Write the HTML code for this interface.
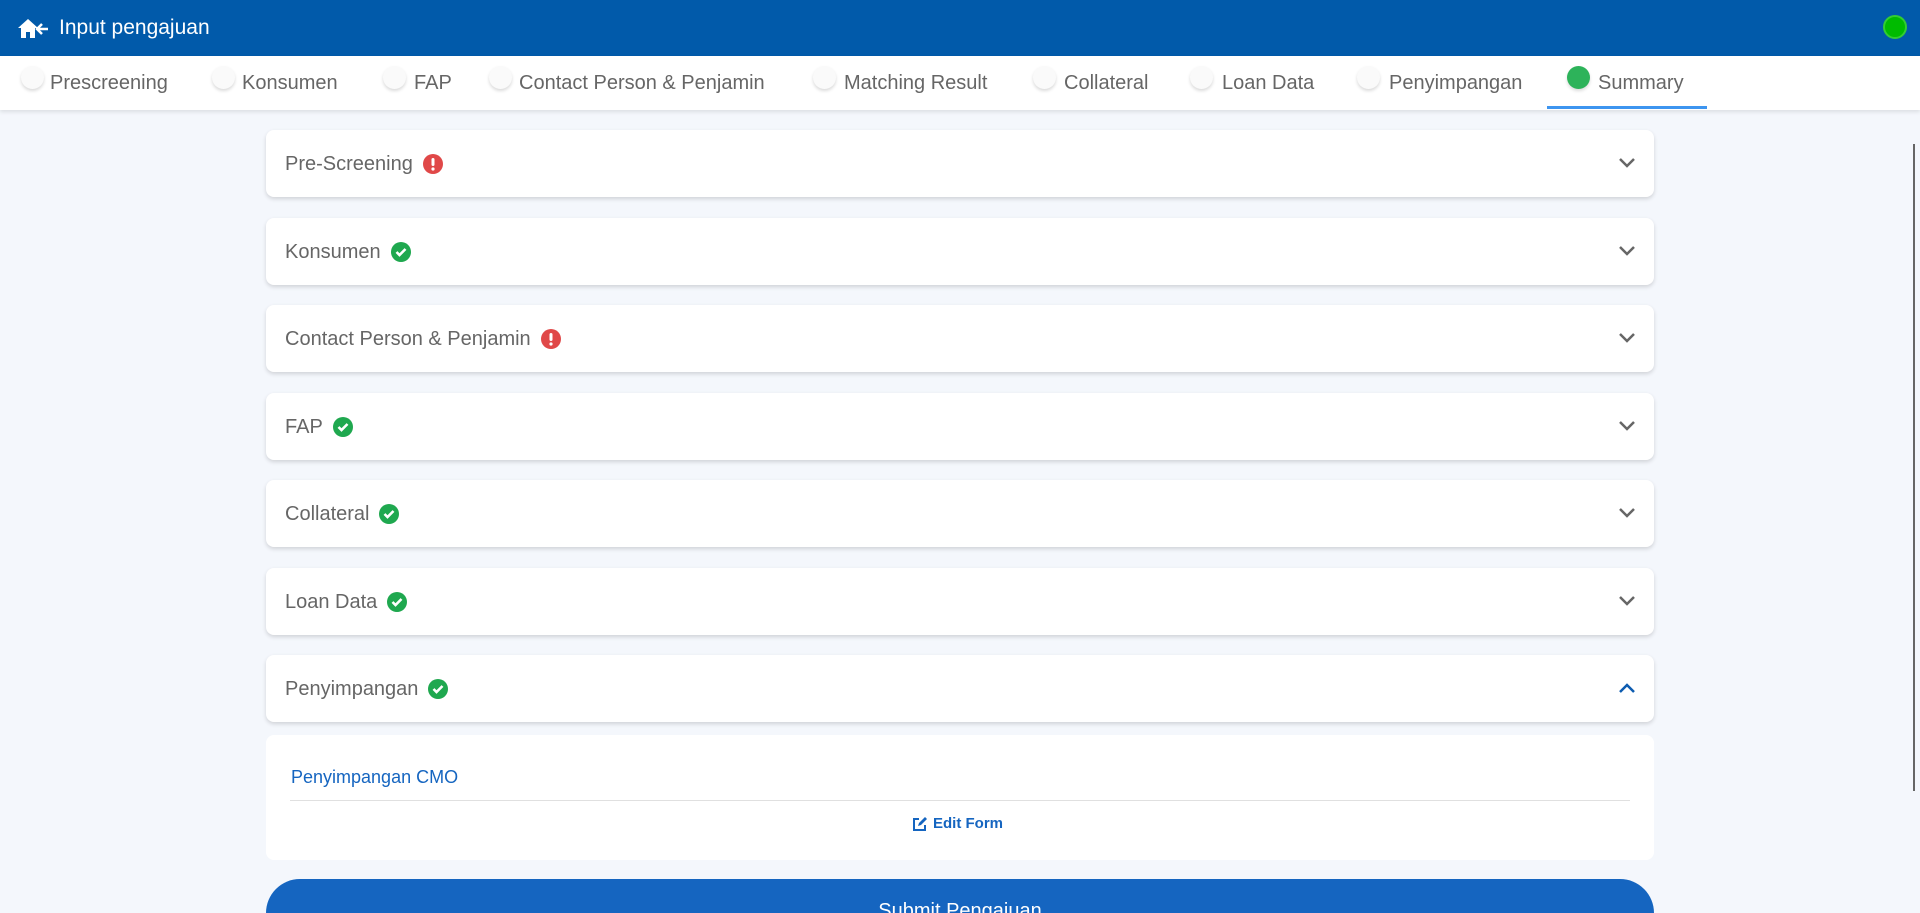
<!DOCTYPE html>
<html style="overflow:hidden;width:1920px;height:913px"><head><meta charset="utf-8"><style>
*{box-sizing:border-box;margin:0;padding:0}
body{width:1920px;height:913px;overflow:hidden;background:#f4f7fc;font-family:"Liberation Sans",sans-serif;position:relative}
.hdr{position:absolute;left:0;top:0;width:1920px;height:56px;background:#015aaa;color:#fff}
.hdr .t{position:absolute;left:59px;top:16px;font-size:21px}
.dot{position:absolute;left:1883px;top:15px;width:24px;height:24px;border-radius:50%;background:#0b0;border:2px solid #3c3}
.tabs{position:absolute;left:0;top:56px;width:1920px;height:54px;background:#fff;box-shadow:0 2px 4px rgba(0,0,0,.1)}
.tab{position:absolute;top:15px;font-size:20px;color:#666;line-height:24px}
.c{position:absolute;top:10px;width:23px;height:23px;border-radius:50%;background:#fafafa;box-shadow:0 2px 3px rgba(0,0,0,.15)}
.ul{position:absolute;left:1547px;top:50px;width:160px;height:3px;background:#3d95f0}
.card{position:absolute;left:266px;width:1388px;height:67px;background:#fff;border-radius:8px;box-shadow:0 2px 4px rgba(0,0,0,.15)}
.card .n{position:absolute;left:19px;top:22px;font-size:20px;color:#666;line-height:24px;display:flex;align-items:center}
.ic{display:inline-block;width:20px;height:20px;margin-left:10px}
.chev{position:absolute;left:1352px;top:27px}
.panel{position:absolute;left:266px;top:735px;width:1388px;height:125px;background:#fff;border-radius:8px}
.sb{position:absolute;left:1913px;top:144px;width:2px;height:647px;background:#666}
.btn{position:absolute;left:266px;top:879px;width:1388px;height:34px;overflow:hidden;background:#1565c0;border-radius:40px 40px 0 0;color:#fff;font-size:20px;text-align:center;padding-top:20px;line-height:24px}
</style></head><body>
<div class="hdr">
<svg style="position:absolute;left:18px;top:18px" width="32" height="22" viewBox="0 0 32 22"><path d="M10 1 L0 10 h3 v10 h5 v-6 h4 v6 h5 v-10 h3z" fill="#fff"/><path d="M30 11 H20 M24 6 l-5 5 5 5" stroke="#fff" stroke-width="2.5" fill="none"/></svg>
<div class="t">Input pengajuan</div><div class="dot"></div></div>
<div class="tabs">
<div class="c" style="left:21px"></div><div class="tab" style="left:50px">Prescreening</div>
<div class="c" style="left:212px"></div><div class="tab" style="left:242px">Konsumen</div>
<div class="c" style="left:383px"></div><div class="tab" style="left:414px">FAP</div>
<div class="c" style="left:489px"></div><div class="tab" style="left:519px">Contact Person &amp; Penjamin</div>
<div class="c" style="left:813px"></div><div class="tab" style="left:844px">Matching Result</div>
<div class="c" style="left:1033px"></div><div class="tab" style="left:1064px">Collateral</div>
<div class="c" style="left:1190px"></div><div class="tab" style="left:1222px">Loan Data</div>
<div class="c" style="left:1357px"></div><div class="tab" style="left:1389px">Penyimpangan</div>
<div class="c" style="left:1567px;background:#2db35a"></div><div class="tab" style="left:1598px">Summary</div>
<div class="ul"></div></div>

<div class="card" style="top:130px"><div class="n">Pre-Screening<svg class="ic" viewBox="0 0 20 20"><circle cx="10" cy="10" r="10" fill="#e04848"/><rect x="8.5" y="4" width="3" height="8" rx="1.5" fill="#fff"/><circle cx="10" cy="15" r="1.6" fill="#fff"/></svg></div><svg class="chev" width="18" height="12"><path d="M2 2 L9 9 L16 2" stroke="#666" stroke-width="2.5" fill="none"/></svg></div>
<div class="card" style="top:218px"><div class="n">Konsumen<svg class="ic" viewBox="0 0 20 20"><circle cx="10" cy="10" r="10" fill="#1fa84f"/><path d="M5.5 10 l3 3 l6-6" stroke="#fff" stroke-width="2.6" fill="none"/></svg></div><svg class="chev" width="18" height="12"><path d="M2 2 L9 9 L16 2" stroke="#666" stroke-width="2.5" fill="none"/></svg></div>
<div class="card" style="top:305px"><div class="n">Contact Person &amp; Penjamin<svg class="ic" viewBox="0 0 20 20"><circle cx="10" cy="10" r="10" fill="#e04848"/><rect x="8.5" y="4" width="3" height="8" rx="1.5" fill="#fff"/><circle cx="10" cy="15" r="1.6" fill="#fff"/></svg></div><svg class="chev" width="18" height="12"><path d="M2 2 L9 9 L16 2" stroke="#666" stroke-width="2.5" fill="none"/></svg></div>
<div class="card" style="top:393px"><div class="n">FAP<svg class="ic" viewBox="0 0 20 20"><circle cx="10" cy="10" r="10" fill="#1fa84f"/><path d="M5.5 10 l3 3 l6-6" stroke="#fff" stroke-width="2.6" fill="none"/></svg></div><svg class="chev" width="18" height="12"><path d="M2 2 L9 9 L16 2" stroke="#666" stroke-width="2.5" fill="none"/></svg></div>
<div class="card" style="top:480px"><div class="n">Collateral<svg class="ic" viewBox="0 0 20 20"><circle cx="10" cy="10" r="10" fill="#1fa84f"/><path d="M5.5 10 l3 3 l6-6" stroke="#fff" stroke-width="2.6" fill="none"/></svg></div><svg class="chev" width="18" height="12"><path d="M2 2 L9 9 L16 2" stroke="#666" stroke-width="2.5" fill="none"/></svg></div>
<div class="card" style="top:568px"><div class="n">Loan Data<svg class="ic" viewBox="0 0 20 20"><circle cx="10" cy="10" r="10" fill="#1fa84f"/><path d="M5.5 10 l3 3 l6-6" stroke="#fff" stroke-width="2.6" fill="none"/></svg></div><svg class="chev" width="18" height="12"><path d="M2 2 L9 9 L16 2" stroke="#666" stroke-width="2.5" fill="none"/></svg></div>
<div class="card" style="top:655px"><div class="n">Penyimpangan<svg class="ic" viewBox="0 0 20 20"><circle cx="10" cy="10" r="10" fill="#1fa84f"/><path d="M5.5 10 l3 3 l6-6" stroke="#fff" stroke-width="2.6" fill="none"/></svg></div><svg class="chev" width="18" height="12"><path d="M2 10 L9 3 L16 10" stroke="#0d5cb0" stroke-width="2.5" fill="none"/></svg></div>

<div class="panel">
<div style="position:absolute;left:25px;top:32px;font-size:18px;color:#1565c0">Penyimpangan CMO</div>
<div style="position:absolute;left:24px;top:65px;width:1340px;height:1px;background:#e0e0e0"></div>
<div style="position:absolute;left:646px;top:80px;font-size:15px;color:#1565c0;font-weight:bold;display:flex;align-items:center"><svg width="16" height="16" viewBox="0 0 16 16" style="margin-right:5px"><path d="M7 3 H2 v11 h11 v-5" stroke="#1565c0" stroke-width="2" fill="none"/><path d="M6 10 l1-3 6-6 2 2-6 6z" fill="#1565c0"/></svg>Edit Form</div>
</div>
<div class="sb"></div>
<div class="btn">Submit Pengajuan</div>
</body></html>
